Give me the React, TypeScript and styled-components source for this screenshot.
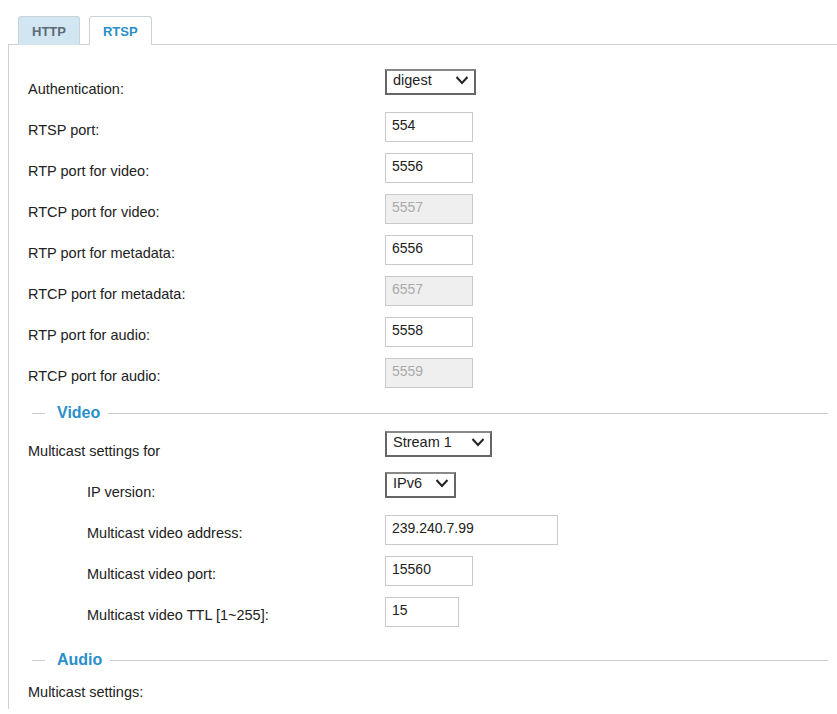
import React from "react";
import styled, { createGlobalStyle } from "styled-components";

const Global = createGlobalStyle`
  body { margin: 0; background: #fff; font-family: "Liberation Sans", Arial, sans-serif; color: #222; overflow: hidden; }
`;

const Page = styled.div`
  padding: 16px 0 0 8px;
`;

const Tabs = styled.div`
  display: flex;
  gap: 9px;
  padding-left: 10px;
`;

const Tab = styled.div<{ $active?: boolean }>`
  height: 28px;
  padding: 0 13px;
  display: flex;
  align-items: center;
  font-size: 13px;
  font-weight: bold;
  border: 1px solid #c8d3da;
  border-bottom: none;
  border-radius: 3px 3px 0 0;
  background: ${(p) => (p.$active ? "#fff" : "#d2e6f2")};
  color: ${(p) => (p.$active ? "#2a8fc9" : "#5a6b78")};
  margin-bottom: -1px;
  position: relative;
`;

const Panel = styled.div`
  border-top: 1px solid #cfcfcf;
  border-left: 1px solid #cfcfcf;
  padding: 20px 0 0 19px;
`;

const Row = styled.div`
  display: flex;
  align-items: center;
  height: 41px;
  font-size: 14.5px;
`;

const Label = styled.div<{ $indent?: boolean }>`
  width: ${(p) => (p.$indent ? 298 : 357)}px;
  padding-left: ${(p) => (p.$indent ? 59 : 0)}px;
  padding-top: 6px;
`;

const Input = styled.div<{ $w?: number; $disabled?: boolean }>`
  width: ${(p) => p.$w ?? 88}px;
  height: 30px;
  box-sizing: border-box;
  border: 1px solid #c9c9c9;
  background: ${(p) => (p.$disabled ? "#efefef" : "#fff")};
  color: ${(p) => (p.$disabled ? "#aaa" : "#222")};
  font-size: 14px;
  padding: 4px 0 0 6px;
`;

const Select = styled.div<{ $w: number }>`
  width: ${(p) => p.$w}px;
  height: 26px;
  box-sizing: border-box;
  border: 2px solid #666;
  border-top-color: #888;
  display: flex;
  align-items: center;
  justify-content: space-between;
  padding: 0 5px 4px 6px;
  font-size: 14.5px;
  margin-top: -8px;
`;

const Legend = styled.div<{ $top?: number; $bottom?: number }>`
  display: flex;
  align-items: center;
  height: 40px;
  margin: ${(p) => p.$top ?? 0}px 9px ${(p) => p.$bottom ?? -6}px 4px;
  color: #2a8fc9;
  font-weight: bold;
  font-size: 16px;
  &::before {
    content: "";
    width: 13px;
    border-top: 1px solid #ccc;
    margin-right: 12px;
  }
  &::after {
    content: "";
    flex: 1;
    border-top: 1px solid #ccc;
    margin-left: 8px;
  }
`;

const Chevron = () => (
  <svg width="14" height="10" viewBox="0 0 14 10">
    <path d="M1.5 2 L7 8 L12.5 2" fill="none" stroke="#222" strokeWidth="2" />
  </svg>
);

const ports: [string, string, boolean][] = [
  ["RTSP port:", "554", false],
  ["RTP port for video:", "5556", false],
  ["RTCP port for video:", "5557", true],
  ["RTP port for metadata:", "6556", false],
  ["RTCP port for metadata:", "6557", true],
  ["RTP port for audio:", "5558", false],
  ["RTCP port for audio:", "5559", true],
];

export default function App() {
  return (
    <Page>
      <Global />
      <Tabs>
        <Tab>HTTP</Tab>
        <Tab $active>RTSP</Tab>
      </Tabs>
      <Panel>
        <Row>
          <Label>Authentication:</Label>
          <Select $w={91}>digest <Chevron /></Select>
        </Row>
        {ports.map(([l, v, d]) => (
          <Row key={l}>
            <Label>{l}</Label>
            <Input $disabled={d}>{v}</Input>
          </Row>
        ))}
        <Legend>Video</Legend>
        <Row>
          <Label>Multicast settings for</Label>
          <Select $w={107}>Stream 1 <Chevron /></Select>
        </Row>
        <Row>
          <Label $indent>IP version:</Label>
          <Select $w={71}>IPv6 <Chevron /></Select>
        </Row>
        <Row>
          <Label $indent>Multicast video address:</Label>
          <Input $w={173}>239.240.7.99</Input>
        </Row>
        <Row>
          <Label $indent>Multicast video port:</Label>
          <Input>15560</Input>
        </Row>
        <Row>
          <Label $indent>Multicast video TTL [1~255]:</Label>
          <Input $w={74}>15</Input>
        </Row>
        <Legend $top={8} $bottom={-12}>Audio</Legend>
        <Row>
          <Label>Multicast settings:</Label>
        </Row>
      </Panel>
    </Page>
  );
}
